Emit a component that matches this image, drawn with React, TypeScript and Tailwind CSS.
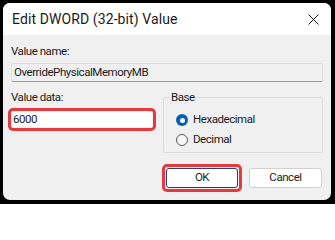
import React from "react";

function Radio(props: { checked: boolean; label: string }) {
  return (
    <label className="flex items-center gap-[5px] h-[20px]">
      {props.checked ? (
        <span className="w-[12px] h-[12px] rounded-full bg-[#005fb8] flex items-center justify-center">
          <span className="w-[5px] h-[5px] rounded-full bg-white"></span>
        </span>
      ) : (
        <span className="w-[12px] h-[12px] rounded-full border border-[#5a5a5a] bg-[#f7f7f7]"></span>
      )}
      <span>{props.label}</span>
    </label>
  );
}

export default function App() {
  return (
    <div className="w-[335px] h-[204px] bg-black pt-[3px] pl-[3px] pr-[4px] pb-[4px] font-['Roboto','Liberation_Sans',sans-serif] text-[11.5px] tracking-[-0.45px] text-[#1b1b1b]">
      <div className="w-full h-full bg-[#f0f0f0] rounded-[7px] overflow-hidden flex flex-col">
        <div className="h-[32px] shrink-0 bg-white flex items-center justify-between pl-[9px] pr-[12px]">
          <span className="text-[14px] tracking-[0.1px] text-[#1a1a1a]">Edit DWORD (32-bit) Value</span>
          <svg width="11" height="11" viewBox="0 0 11 11" fill="none" stroke="#1a1a1a" strokeWidth="1">
            <path d="M0.5 0.5 L10.5 10.5 M10.5 0.5 L0.5 10.5" />
          </svg>
        </div>

        <div className="flex flex-col px-[8px] pt-[8px]">
          <div className="leading-[16px]">Value name:</div>
          <div className="mt-[4px] h-[19px] bg-[#f0f0f0] border border-[#dcdcdc] border-b-[#9a9a9a] rounded-[2px] px-[2px] flex items-center">
            OverridePhysicalMemoryMB
          </div>

          <div className="mt-[7px] flex gap-[7px]">
            <div className="flex flex-col">
              <div className="leading-[16px]">Value data:</div>
              <div className="mt-[3px] -ml-[3px] w-[148px] border-[3px] border-[#e3393f] rounded-[5px] p-[1px]">
                <div className="h-[15px] bg-white flex items-center px-[1px]">6000</div>
              </div>
            </div>

            <fieldset className="flex-1 h-[64px] border border-[#dcdcdc] rounded-[2px]">
              <legend className="ml-[6px] px-[1px] leading-[16px]">Base</legend>
              <div className="pl-[12px] pt-[5px] flex flex-col">
                <Radio checked={true} label="Hexadecimal" />
                <Radio checked={false} label="Decimal" />
              </div>
            </fieldset>
          </div>

          <div className="mt-[11px] flex justify-end gap-[7px] pr-[1px]">
            <div className="border-[3px] border-[#e3393f] rounded-[5px] p-[1px]">
              <button className="w-[72px] h-[20px] bg-white border border-[#2c3e7a] rounded-[3px] leading-none">
                OK
              </button>
            </div>
            <div className="py-[4px]">
              <button className="w-[73px] h-[20px] bg-white border border-[#d0d0d0] rounded-[3px] leading-none">
                Cancel
              </button>
            </div>
          </div>
        </div>
      </div>
    </div>
  );
}
